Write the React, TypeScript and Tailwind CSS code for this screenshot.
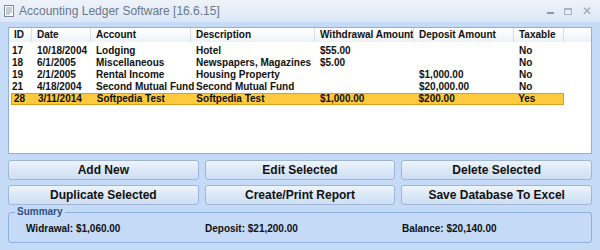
import React from "react";

/* ── Data ── */
type Entry = {
  id: number;
  date: string;
  account: string;
  description: string;
  withdrawal: string;
  deposit: string;
  taxable: string;
};

const entries: Entry[] = [
  { id: 17, date: "10/18/2004", account: "Lodging", description: "Hotel", withdrawal: "$55.00", deposit: "", taxable: "No" },
  { id: 18, date: "6/1/2005", account: "Miscellaneous", description: "Newspapers, Magazines", withdrawal: "$5.00", deposit: "", taxable: "No" },
  { id: 19, date: "2/1/2005", account: "Rental Income", description: "Housing Property", withdrawal: "", deposit: "$1,000.00", taxable: "No" },
  { id: 21, date: "4/18/2004", account: "Second Mutual Fund", description: "Second Mutual Fund", withdrawal: "", deposit: "$20,000.00", taxable: "No" },
  { id: 28, date: "3/11/2014", account: "Softpedia Test", description: "Softpedia Test", withdrawal: "$1,000.00", deposit: "$200.00", taxable: "Yes" },
];

const cols = [
  { label: "ID", w: "w-[23px]" },
  { label: "Date", w: "w-[59px]" },
  { label: "Account", w: "w-[100px]" },
  { label: "Description", w: "w-[124px]" },
  { label: "Withdrawal Amount", w: "w-[99px]" },
  { label: "Deposit Amount", w: "w-[100px]" },
  { label: "Taxable", w: "w-[50px]" },
];

/* ── Helper ── */
function Btn({ label }: { label: string }) {
  return (
    <button
      type="button"
      className="flex h-[20px] flex-1 items-center justify-center rounded-[3px] border border-[#9fb6d6] bg-gradient-to-b from-[#eef4fc] via-[#dce8f7] to-[#cddff5] text-[12px] font-bold text-[#111]"
    >
      {label}
    </button>
  );
}

/* ── Page ── */
export default function App() {
  return (
    <div className="flex h-[250px] w-[600px] flex-col overflow-hidden bg-[#c4daf6] font-['Liberation_Sans',Arial,sans-serif]">
      {/* Title bar */}
      <div className="flex h-[22px] items-center bg-gradient-to-b from-[#eef3fa] to-[#dbe7f6] pl-[4px] pr-[8px]">
        <svg width="10" height="12" viewBox="0 0 10 12" className="mr-[5px]">
          <rect x="0.5" y="0.5" width="9" height="11" fill="#fff" stroke="#7d8a9a" />
          <path d="M2 3h6M2 5h6M2 7h6M2 9h4" stroke="#8e9aab" strokeWidth="1" />
        </svg>
        <span className="text-[12px] text-[#6a7788]">Accounting Ledger Software [16.6.15]</span>
        <div className="ml-auto flex items-center gap-[10px] text-[#9aa6b4]">
          <span className="mt-[4px] block h-[2px] w-[7px] bg-[#8a96a6]" />
          <span className="block h-[7px] w-[8px] border border-t-2 border-[#a6b1bf]" />
          <span className="text-[12px] leading-none">✕</span>
        </div>
      </div>

      <div className="flex flex-1 flex-col px-[8px] pt-[5px]">
        {/* List */}
        <div className="h-[127px] border border-[#8fb0da] bg-white">
          <div className="flex h-[14px] items-center bg-gradient-to-b from-[#ffffff] to-[#eef2f8] text-[10px] font-bold text-[#111]">
            {cols.map((c) => (
              <div
                key={c.label}
                className={`${c.w} h-full overflow-hidden whitespace-nowrap border-r border-[#d5dde8] pl-[5px] leading-[14px]`}
              >
                {c.label}
              </div>
            ))}
          </div>
          <div className="pt-[3px]">
            {entries.map((e) => {
              const sel = e.id === 28;
              return (
                <div
                  key={e.id}
                  className={`flex h-[12px] items-center whitespace-nowrap text-[10px] font-bold leading-[12px] text-[#111] ${
                    sel ? "ml-[2px] w-[553px] border border-[#d9a21a] bg-[#fcc93f]" : ""
                  }`}
                >
                  <div className={`${sel ? "w-[21px] pl-[2px]" : "w-[23px] pl-[3px]"}`}>{e.id}</div>
                  <div className="w-[59px] pl-[5px]">{e.date}</div>
                  <div className="w-[100px] pl-[5px]">{e.account}</div>
                  <div className="w-[124px] pl-[5px]">{e.description}</div>
                  <div className="w-[99px] pl-[5px]">{e.withdrawal}</div>
                  <div className="w-[100px] pl-[5px]">{e.deposit}</div>
                  <div className="w-[50px] pl-[5px]">{e.taxable}</div>
                </div>
              );
            })}
          </div>
        </div>

        {/* Buttons */}
        <div className="mt-[6px] flex gap-[6px]">
          <Btn label="Add New" />
          <Btn label="Edit Selected" />
          <Btn label="Delete Selected" />
        </div>
        <div className="mt-[5px] flex gap-[6px]">
          <Btn label="Duplicate Selected" />
          <Btn label="Create/Print Report" />
          <Btn label="Save Database To Excel" />
        </div>

        {/* Summary */}
        <div className="relative mt-[7px] h-[31px] rounded-[3px] border border-[#8fb0da]">
          <span className="absolute left-[6px] top-[-7px] bg-[#c4daf6] px-[2px] text-[10px] font-bold leading-[12px] text-[#2f4f86]">
            Summary
          </span>
          <div className="flex h-full items-center whitespace-nowrap pt-[2px] text-[10px] font-bold text-[#111]">
            <span className="w-[196px] pl-[17px]">Widrawal: $1,060.00</span>
            <span className="w-[197px]">Deposit: $21,200.00</span>
            <span>Balance: $20,140.00</span>
          </div>
        </div>
      </div>
    </div>
  );
}
